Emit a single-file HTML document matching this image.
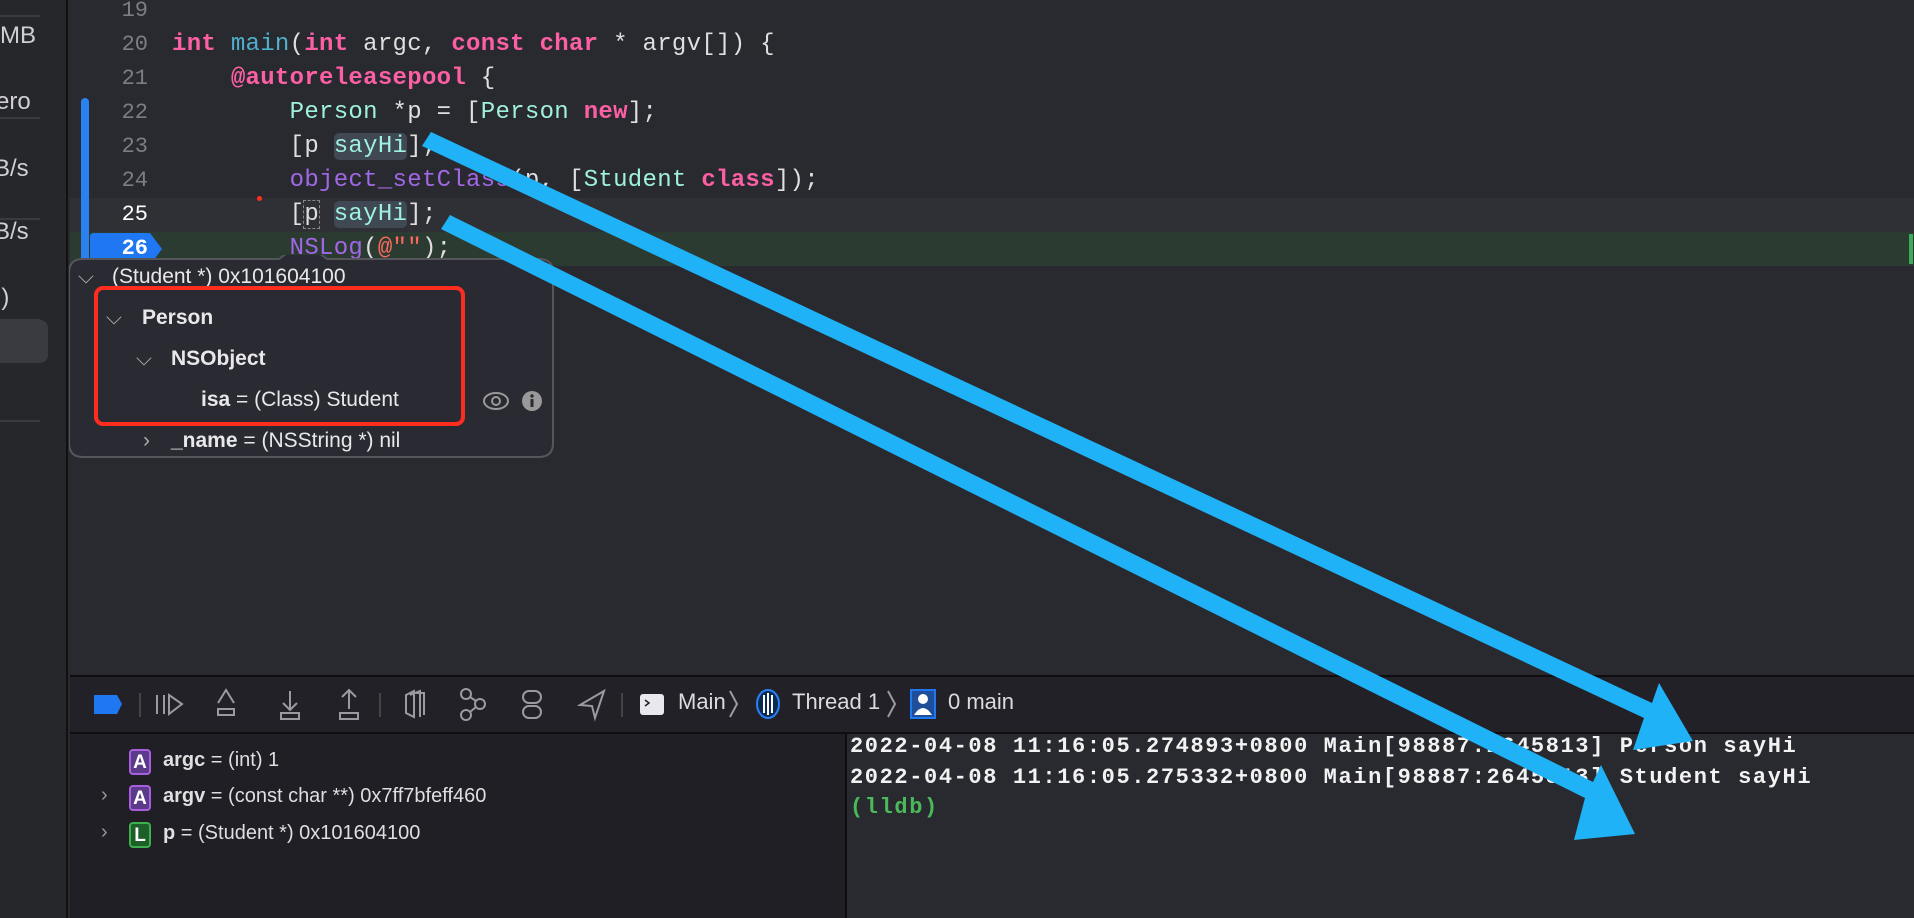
<!DOCTYPE html>
<html><head><meta charset="utf-8"><style>
*{margin:0;padding:0;box-sizing:border-box}
body{width:1914px;height:918px;background:#292a2f;position:relative;overflow:hidden;font-family:"Liberation Sans",sans-serif;color:#dfdfe0}
.a{position:absolute;white-space:pre}
.mono{font-family:"Liberation Mono",monospace;font-size:24px;line-height:34px;letter-spacing:0.3px}
.ln{width:92px;text-align:right;left:56px;color:#7d7e84;font-family:"Liberation Mono",monospace;font-size:22px;line-height:34px}
.kw{color:#fc5fa3;font-weight:bold}
.fn{color:#4eb0cc}
.ty{color:#9ef1dd}
.pu{color:#a167e6}
.st{color:#fc6a5d}
.hl{background:#3f4853;border-radius:5px;color:#9ef1dd}
.sb{color:#d0d0d4;font-size:24px}
.sep{position:absolute;left:0;width:40px;height:2px;background:#3a3b40}
.pop{font-size:21px;color:#e8e8ea}
.badge{position:absolute;width:22px;height:26px;border-radius:4px;color:#fff;font-weight:bold;font-size:19px;text-align:center;line-height:24px}
.dt{position:absolute;top:689px;font-size:22px;color:#dcdce0}
</style></head><body>
<div class="a" style="left:0;top:0;width:68px;height:918px;background:#26272b;border-right:2px solid #111"></div>
<div class="sep" style="top:15px"></div><div class="a sb" style="left:0;top:22px">MB</div>
<div class="sep" style="top:117px"></div>
<div class="sep" style="top:218px"></div>
<div class="sep" style="top:319px"></div>
<div class="sep" style="top:420px"></div>
<div class="a sb" style="left:-4px;top:88px">ero</div>
<div class="a sb" style="left:-6px;top:155px">B/s</div>
<div class="a sb" style="left:-6px;top:218px">B/s</div>
<div class="a sb" style="left:-4px;top:284px">l)</div>
<div class="a" style="left:0;top:320px;width:48px;height:43px;background:#3a3b40;border-radius:0 8px 8px 0"></div>
<div class="a" style="left:70px;top:0;width:1844px;height:675px;background:#292a2f"></div>
<div class="a" style="left:70px;top:198px;width:1844px;height:34px;background:#2f3036"></div>
<div class="a" style="left:70px;top:232px;width:1844px;height:34px;background:#2c3b31"></div>
<div class="a" style="left:1909px;top:234px;width:4px;height:30px;background:#3cab5a"></div>
<div class="a" style="left:81px;top:98px;width:8px;height:168px;background:#2a82f0;border-radius:4px"></div>
<svg class="a" style="left:90px;top:233px" width="76" height="32"><path d="M4 0H60L72 16L60 32H4Q0 32 0 28V4Q0 0 4 0Z" fill="#1f78f2"/></svg>
<div class="a ln" style="top:-6px">19</div>
<div class="a ln" style="top:28px">20</div>
<div class="a ln" style="top:62px">21</div>
<div class="a ln" style="top:96px">22</div>
<div class="a ln" style="top:130px">23</div>
<div class="a ln" style="top:164px">24</div>
<div class="a ln" style="top:198px;color:#fff">25</div>
<div class="a ln" style="top:232px;color:#fff;font-weight:bold">26</div>
<div class="a mono" style="left:172px;top:28px"><span class="kw">int</span> <span class="fn">main</span>(<span class="kw">int</span> argc, <span class="kw">const</span> <span class="kw">char</span> * argv[]) {</div>
<div class="a mono" style="left:172px;top:62px">    <span class="kw">@autoreleasepool</span> {</div>
<div class="a mono" style="left:172px;top:96px">        <span class="ty">Person</span> *p = [<span class="ty">Person</span> <span class="kw">new</span>];</div>
<div class="a mono" style="left:172px;top:130px">        [p <span class="hl">sayHi</span>];</div>
<div class="a mono" style="left:172px;top:164px">        <span class="pu">object_setClass</span>(p, [<span class="ty">Student</span> <span class="kw">class</span>]);</div>
<div class="a mono" style="left:172px;top:198px">        [<span style="outline:1px dashed #888">p</span> <span class="hl">sayHi</span>];</div>
<div class="a mono" style="left:172px;top:232px">        <span class="pu">NSLog</span>(<span class="st">@""</span>);</div>
<div class="a" style="left:257px;top:196px;width:5px;height:5px;border-radius:50%;background:#ff2d20"></div>
<svg class="a" style="left:69px;top:255px" width="490" height="210">
<path d="M14 4H210L234 -14L258 4H470Q484 4 484 18V188Q484 202 470 202H14Q0 202 0 188V18Q0 4 14 4Z" fill="#2a2a32" stroke="#55565c" stroke-width="2"/>
</svg>
<div class="a pop" style="left:78px;top:265px;color:#aaa">⌵</div>
<div class="a pop" style="left:112px;top:265px">(Student *) 0x101604100</div>
<div class="a pop" style="left:106px;top:306px;color:#aaa">⌵</div>
<div class="a pop" style="left:142px;top:306px;font-weight:bold">Person</div>
<div class="a pop" style="left:136px;top:347px;color:#aaa">⌵</div>
<div class="a pop" style="left:171px;top:347px;font-weight:bold">NSObject</div>
<div class="a pop" style="left:201px;top:388px"><b>isa</b> = (Class) Student</div>
<div class="a pop" style="left:143px;top:429px;color:#aaa">›</div>
<div class="a pop" style="left:171px;top:429px"><b>_name</b> = (NSString *) nil</div>
<svg class="a" style="left:482px;top:389px" width="64" height="24"><ellipse cx="14" cy="12" rx="12" ry="8" fill="none" stroke="#999" stroke-width="2"/><circle cx="14" cy="12" r="4" fill="none" stroke="#999" stroke-width="2"/><circle cx="50" cy="12" r="10" fill="#999"/><rect x="48.5" y="10" width="3" height="8" fill="#2a2a32"/><circle cx="50" cy="7" r="1.7" fill="#2a2a32"/></svg>
<div class="a" style="left:94px;top:286px;width:371px;height:140px;border:4px solid #ff2d20;border-radius:9px"></div>
<!-- debug bar -->
<div class="a" style="left:70px;top:675px;width:1844px;height:2px;background:#0e0e10"></div>
<div class="a" style="left:70px;top:677px;width:1844px;height:55px;background:#222127"></div>
<div class="a" style="left:70px;top:732px;width:1844px;height:2px;background:#0e0e10"></div>
<svg class="a" style="left:0;top:677px" width="1000" height="55" fill="none" stroke="#9a9aa0" stroke-width="2">
<path d="M94 18H117L122 27L117 37H94Z" fill="#1f78f2" stroke="none"/>
<line x1="140" y1="16" x2="140" y2="40" stroke="#444"/>
<path d="M157 18V37M164 18V37M169 18L182 27L169 37Z"/>
<path d="M218 32L226 19L234 32M218 38H234V44H218Z" transform="translate(0,-6)"/>
<path d="M290 14V32M283 26L290 33L297 26M281 36H299V42H281Z"/>
<path d="M349 14V32M342 20L349 13L356 20M340 36H358V42H340Z"/>
<line x1="380" y1="16" x2="380" y2="40" stroke="#444"/>
<path d="M406 18L414 14V40L406 36ZM410 18L420 14V40M416 16L424 16V38"/>
<circle cx="466" cy="17" r="5"/><circle cx="466" cy="38" r="5"/><circle cx="480" cy="27" r="5"/><path d="M470 20L476 24M470 35L476 30"/>
<rect x="523" y="14" width="18" height="12" rx="6"/><rect x="523" y="29" width="18" height="12" rx="6"/>
<path d="M604 14L580 28L592 29L595 41Z"/>
<line x1="622" y1="16" x2="622" y2="40" stroke="#444"/>
<rect x="640" y="17" width="24" height="21" rx="3" fill="#e8e8ee" stroke="none"/>
<path d="M645 23L649 26L645 29" stroke="#222" stroke-width="1.5"/>
<path d="M730 14L737 27L730 40"/>
<ellipse cx="768" cy="27" rx="11" ry="14" fill="#0a2a55" stroke="#2a82f0" stroke-width="2"/>
<path d="M764 18V36M768 16V38M772 18V36" stroke="#fff"/>
<path d="M888 14L895 27L888 40"/>
<rect x="911" y="13" width="24" height="28" fill="#1f4f9a" stroke="#1f78f2"/>
<circle cx="923" cy="22" r="5" fill="#fff" stroke="none"/><path d="M914 38Q923 24 932 38Z" fill="#fff" stroke="none"/>
</svg>
<div class="dt" style="left:678px">Main</div>
<div class="dt" style="left:792px">Thread 1</div>
<div class="dt" style="left:948px">0 main</div>
<!-- variables -->
<div class="a" style="left:70px;top:734px;width:775px;height:184px;background:#1f1f25"></div>
<div class="a" style="left:845px;top:734px;width:2px;height:184px;background:#0e0e10"></div>
<div class="a" style="left:847px;top:734px;width:1067px;height:184px;background:#292a2f"></div>
<div class="badge" style="left:129px;top:749px;background:#5c3a8a;border:2px solid #a55fe0">A</div>
<div class="a" style="left:163px;top:749px;font-size:20px"><b>argc</b> = (int) 1</div>
<div class="a" style="left:101px;top:784px;font-size:20px;color:#999">›</div>
<div class="badge" style="left:129px;top:785px;background:#5c3a8a;border:2px solid #a55fe0">A</div>
<div class="a" style="left:163px;top:785px;font-size:20px"><b>argv</b> = (const char **) 0x7ff7bfeff460</div>
<div class="a" style="left:101px;top:821px;font-size:20px;color:#999">›</div>
<div class="badge" style="left:129px;top:822px;background:#1e5e28;border:2px solid #3cb04a">L</div>
<div class="a" style="left:163px;top:822px;font-size:20px"><b>p</b> = (Student *) 0x101604100</div>
<div class="a" style="left:850px;top:732px;font-family:'Liberation Mono',monospace;font-weight:bold;font-size:22px;line-height:30.5px;letter-spacing:1.6px;color:#f2f2f2">2022-04-08 11:16:05.274893+0800 Main[98887:2645813] Person sayHi
2022-04-08 11:16:05.275332+0800 Main[98887:2645813] Student sayHi
<span style="color:#4bb85a">(lldb)</span></div>
<svg class="a" style="left:0;top:0" width="1914" height="918">
<g fill="#1fb2f7" stroke="none">
<path d="M422 146L431 132L1652 703L1659 683L1693 741L1633 750L1644 718Z"/>
<path d="M441 229L450 215L1593 782L1601 765L1635 834L1574 840L1585 798Z"/>
</g></svg>
</body></html>
